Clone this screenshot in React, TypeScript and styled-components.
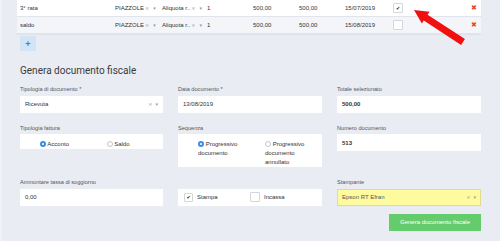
import React from 'react';
import styled, { createGlobalStyle } from 'styled-components';

const GlobalStyle = createGlobalStyle`
  html, body {
    margin: 0;
    padding: 0;
    background: #e9ecf3;
    font-family: "Liberation Sans", Arial, sans-serif;
  }
`;

const rows = [
    { desc: '3° rata', place: 'PIAZZOLE', vat: 'Aliquota r..', qty: '1', price: '500,00', total: '500,00', due: '15/07/2019', checked: true },
    { desc: 'saldo', place: 'PIAZZOLE', vat: 'Aliquota r..', qty: '1', price: '500,00', total: '500,00', due: '15/08/2019', checked: false },
];

const App: React.FC = () => {
    return (
        <>
            <GlobalStyle />
            <Page>
                <Table>
                    {rows.map((r, i) => (
                        <Row key={i} $alt={i % 2 === 1}>
                            <Cell>{r.desc}</Cell>
                            <SelectCell>
                                <SelectText>{r.place}</SelectText>
                                <Clear>×</Clear>
                                <Caret>▾</Caret>
                            </SelectCell>
                            <SelectCell>
                                <SelectText>{r.vat}</SelectText>
                                <Clear>×</Clear>
                                <Caret>▾</Caret>
                            </SelectCell>
                            <Cell>{r.qty}</Cell>
                            <Cell>{r.price}</Cell>
                            <Cell>{r.total}</Cell>
                            <Cell>{r.due}</Cell>
                            <Cell>
                                <Check $size={9}>{r.checked ? '✔' : ''}</Check>
                            </Cell>
                            <Remove>✖</Remove>
                        </Row>
                    ))}
                </Table>
                <PlusButton>+</PlusButton>

                <Form>
                    <Title>Genera documento fiscale</Title>
                    <FormGrid>
                        <Field>
                            <Label>Tipologia di documento *</Label>
                            <Input>
                                <span>Ricevuta</span>
                                <Tools>
                                    <Clear>×</Clear>
                                    <Caret>▾</Caret>
                                </Tools>
                            </Input>
                        </Field>
                        <Field>
                            <Label>Data documento *</Label>
                            <Input>13/08/2019</Input>
                        </Field>
                        <Field>
                            <Label>Totale selezionato</Label>
                            <Input $bold>500,00</Input>
                        </Field>

                        <Field>
                            <Label>Tipologia fattura</Label>
                            <RadioBox>
                                <Option $pad={20}>
                                    <Radio $on /> Acconto
                                </Option>
                                <Option $pad={15}>
                                    <Radio /> Saldo
                                </Option>
                            </RadioBox>
                        </Field>
                        <Field>
                            <Label>Sequenza</Label>
                            <RadioBox>
                                <Option $pad={20}>
                                    <Radio $on /> Progressivo documento
                                </Option>
                                <Option $pad={15}>
                                    <Radio /> Progressivo documento annullato
                                </Option>
                            </RadioBox>
                        </Field>
                        <Field>
                            <Label>Numero documento</Label>
                            <Input $bold>513</Input>
                        </Field>

                        <Field>
                            <Label>Ammontare tassa di soggiorno</Label>
                            <Input>0,00</Input>
                        </Field>
                        <Field>
                            <Label />
                            <CheckBox>
                                <CheckItem $basis={66}>
                                    <Check $size={8}>✔</Check>
                                    Stampa
                                </CheckItem>
                                <CheckItem>
                                    <Check $size={9} />
                                    Incassa
                                </CheckItem>
                            </CheckBox>
                        </Field>
                        <Field>
                            <Label>Stampante</Label>
                            <Input $yellow>
                                <span>Epson RT Efran</span>
                                <Tools>
                                    <Clear>×</Clear>
                                    <Caret>▾</Caret>
                                </Tools>
                            </Input>
                        </Field>
                    </FormGrid>
                    <Actions>
                        <SubmitButton>Genera documento fiscale</SubmitButton>
                    </Actions>
                </Form>

                <Arrow width="500" height="241" viewBox="0 0 500 241">
                    <polygon
                        points="412,10 427.5,11.8 425.6,14.8 462.9,39.1 459.1,44.9 421.8,20.6 419.9,23.6"
                        fill="#f01010"
                    />
                </Arrow>
            </Page>
        </>
    );
};

const Page = styled.div`
    position: relative;
    width: 500px;
    height: 241px;
    overflow: hidden;
    box-sizing: border-box;
    padding: 0 19px 0 15px;
    border-left: 2px solid #f1f2f7;
`;

const Table = styled.div`
    width: 464px;
    box-shadow: 0 1px 1px rgba(0, 0, 0, 0.04);
`;

const Row = styled.div<{ $alt?: boolean }>`
    display: grid;
    grid-template-columns: 95px 47px 45px 46px 46px 46px 48px 70px 21px;
    align-items: center;
    height: 16px;
    background: ${p => (p.$alt ? '#f4f5f9' : '#ffffff')};
    border-bottom: 1px solid #e1e4eb;
    font-size: 6px;
    color: #333;
`;

const Cell = styled.div`
    padding-left: 3px;
    white-space: nowrap;
    overflow: hidden;
    display: flex;
    align-items: center;
`;

const SelectCell = styled(Cell)`
    gap: 1px;
`;

const SelectText = styled.span`
    white-space: nowrap;
`;

const Clear = styled.span`
    font-size: 5px;
    color: #999;
    font-family: "DejaVu Sans", sans-serif;
`;

const Caret = styled.span`
    font-size: 5px;
    color: #999;
    margin-left: 3px;
    font-family: "DejaVu Sans", sans-serif;
`;

const Check = styled.span<{ $size: number }>`
    display: inline-flex;
    align-items: center;
    justify-content: center;
    box-sizing: border-box;
    width: ${p => p.$size + 1}px;
    height: ${p => p.$size + 1}px;
    background: #fff;
    border: 1px solid #d4d6dc;
    border-radius: 1px;
    font-family: "DejaVu Sans", sans-serif;
    font-size: 5px;
    color: #222;
`;

const Remove = styled.div`
    font-family: "DejaVu Sans", sans-serif;
    font-size: 7px;
    color: #e8432b;
    padding-left: 11px;
`;

const PlusButton = styled.div`
    display: flex;
    align-items: center;
    justify-content: center;
    width: 16px;
    height: 15px;
    margin: 2px 0 0 3px;
    background: #d3e4f7;
    color: #3b7fd2;
    font-size: 9px;
    font-weight: 700;
`;

const Form = styled.div`
    padding-left: 3px;
    width: 461px;
`;

const Title = styled.div`
    margin-top: 14px;
    margin-bottom: 8px;
    font-family: Roboto, "Liberation Sans", sans-serif;
    font-size: 10px;
    line-height: 12px;
    color: #3a3a3a;
`;

const FormGrid = styled.div`
    display: grid;
    grid-template-columns: 143px 144px 144px;
    column-gap: 15px;
    row-gap: 11px;
    align-items: start;
`;

const Field = styled.div`
    display: flex;
    flex-direction: column;
`;

const Label = styled.div`
    height: 8px;
    line-height: 8px;
    margin-bottom: 2.5px;
    font-size: 5.6px;
    color: #555;
`;

const Input = styled.div<{ $bold?: boolean; $yellow?: boolean }>`
    display: flex;
    align-items: center;
    justify-content: space-between;
    box-sizing: border-box;
    height: 17px;
    padding: 0 4px;
    background: ${p => (p.$yellow ? '#fdfb9e' : '#ffffff')};
    border: 1px solid ${p => (p.$yellow ? '#e4dc86' : '#ffffff')};
    font-size: 6px;
    font-weight: ${p => (p.$bold ? 700 : 400)};
    color: ${p => (p.$yellow ? '#555' : '#333')};
`;

const Tools = styled.span`
    display: flex;
    align-items: center;
`;

const RadioBox = styled.div`
    display: grid;
    grid-template-columns: 1fr 1fr;
    background: #fff;
    padding-top: 6px;
    font-size: 6px;
    line-height: 9px;
    color: #333;
`;

const Option = styled.div<{ $pad: number }>`
    padding-left: ${p => p.$pad}px;
    max-width: 46px;
`;

const Radio = styled.span<{ $on?: boolean }>`
    display: inline-block;
    box-sizing: border-box;
    width: 6px;
    height: 6px;
    border-radius: 50%;
    vertical-align: -1px;
    background: #fff;
    border: ${p => (p.$on ? '2px solid #3c8ce6' : '1px solid #c4c6cc')};
`;

const CheckBox = styled.div`
    display: flex;
    align-items: center;
    height: 17px;
    padding-left: 6px;
    background: #fff;
    font-size: 6px;
    color: #333;
`;

const CheckItem = styled.div<{ $basis?: number }>`
    display: flex;
    align-items: center;
    gap: 4px;
    flex: 0 0 ${p => (p.$basis ? `${p.$basis}px` : 'auto')};
`;

const Actions = styled.div`
    display: flex;
    justify-content: flex-end;
    margin-top: 8px;
`;

const SubmitButton = styled.div`
    display: flex;
    align-items: center;
    justify-content: center;
    width: 92px;
    height: 17px;
    background: #64cc6c;
    color: #fff;
    font-size: 6px;
`;

const Arrow = styled.svg`
    position: absolute;
    top: 0;
    left: 0;
    pointer-events: none;
`;

export default App;
